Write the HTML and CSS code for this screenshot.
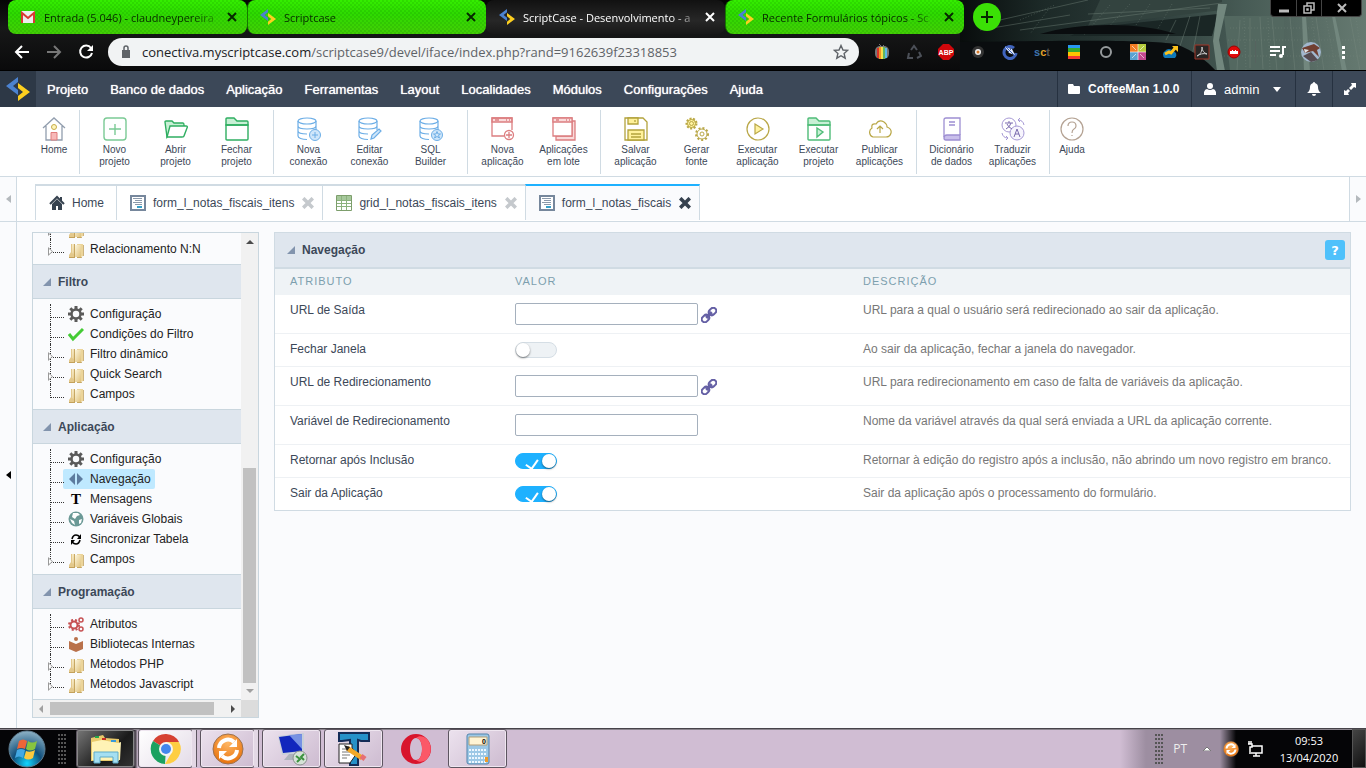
FILE: index.html
```html
<!DOCTYPE html>
<html lang="pt-BR">
<head>
    <meta charset="UTF-8">
    <meta name="viewport" content="width=device-width, initial-scale=1.0">
    <title>ScriptCase - Desenvolvimento</title>
    <link rel="stylesheet" href="styles.css">
</head>
<body>
    <!-- Shared icons -->
    <svg class="sprite" width="0" height="0" aria-hidden="true">
        <defs>
            <linearGradient id="folder-fill" x1="0" y1="0" x2="1" y2="1">
                <stop offset="0" stop-color="#fdf6dc"/>
                <stop offset="1" stop-color="#dfc07a"/>
            </linearGradient>
            <radialGradient id="orange-ball" cx="0.5" cy="0.3" r="0.7">
                <stop offset="0" stop-color="#ffb765"/>
                <stop offset="1" stop-color="#e8720c"/>
            </radialGradient>
        </defs>
        <symbol id="sc-logo" viewBox="0 0 24 24">
            <path fill="#4b82d0" d="M12 0 0 9l12 9v-5L7 9l5-4z"/>
            <path fill="#fdcf1f" d="M12 6v5l5 4-5 4v5l12-9z"/>
        </symbol>
        <symbol id="close" viewBox="0 0 10 10">
            <path d="M1 1l8 8M9 1L1 9" stroke="currentColor" stroke-width="2" fill="none"/>
        </symbol>
        <symbol id="folder" viewBox="0 0 16 16">
            <path fill="url(#folder-fill)" d="M3 1h4v13H3z"/>
            <path fill="#e3c88b" d="M1 15v-3l2-3V1l1 0v9l3 2v3z"/>
            <path fill="#c3a15a" d="M1 14h6v1H1z"/>
            <path fill="url(#folder-fill)" d="M7 2h6v12H7z"/>
            <path fill="#ecd59a" d="M9 1h6v12l-2 1v1H9v-1h4V2H9z"/>
            <path d="M6.500 1v13M15.500 2v11M9 14.500h5" stroke="#b8944a" stroke-opacity="0.700" fill="none"/>
        </symbol>
        <symbol id="gear" viewBox="0 0 16 16">
            <circle cx="8" cy="8" r="4.500" fill="none" stroke="currentColor" stroke-width="2.500"/>
            <path d="M8 0v3M8 13v3M0 8h3M13 8h3M2.300 2.300l2.200 2.200M11.500 11.500l2.200 2.200M13.700 2.300l-2.200 2.200M4.500 11.500l-2.200 2.200" stroke="currentColor" stroke-width="3"/>
        </symbol>
        <symbol id="form-icon" viewBox="0 0 16 16">
            <path fill="#fff" stroke="#76879c" stroke-width="2" d="M1 1h14v14H1z"/>
            <path stroke="#8b99aa" d="M3 3.500h9M5 5.500h7M3 7.500h9M5 9.500h7" fill="none"/>
            <path stroke="#36a0c8" stroke-width="2" d="M7 12h5"/>
        </symbol>
        <symbol id="database" viewBox="0 0 24 24">
            <g fill="none" stroke="#6daee6" stroke-width="1.200">
                <ellipse cx="10" cy="4" rx="9" ry="3"/>
                <path d="M1 4v15c0 2 4 3.500 9 3.500M19 4v9M1 9c0 2 4 3 9 3s9-1 9-3M1 14c0 2 4 3 9 3"/>
            </g>
        </symbol>
        <symbol id="sync" viewBox="0 0 32 32">
            <circle cx="16" cy="16" r="15" fill="url(#orange-ball)" stroke="#9b7252" stroke-width="1"/>
            <path d="M7 15a9 9 0 0 1 15-6M25 17a9 9 0 0 1-15 6" fill="none" stroke="#fff" stroke-width="4"/>
            <path d="M25 6v8h-8zM7 26v-8h8z" fill="#fff"/>
        </symbol>
        <symbol id="link" viewBox="0 0 16 16">
            <g fill="none" stroke="#6560a5" stroke-width="2" transform="rotate(-45 8 8)">
                <rect x="-1" y="5" width="8" height="6" rx="3"/>
                <rect x="9" y="5" width="8" height="6" rx="3"/>
                <path d="M4 8h8" stroke-width="3"/>
            </g>
        </symbol>
        <symbol id="tri" viewBox="0 0 8 8">
            <path fill="#8294ad" d="M8 0v8H0z"/>
        </symbol>
    </svg>

    <!-- Browser -->
    <header class="browser">
        <svg class="theme" viewBox="0 0 406 71" aria-hidden="true">
            <defs>
                <linearGradient id="sky" x1="0" x2="1" y1="0" y2="0">
                    <stop offset="0" stop-color="#080c0c"/>
                    <stop offset="0.200" stop-color="#1c2927"/>
                    <stop offset="0.450" stop-color="#2c3b39"/>
                    <stop offset="0.700" stop-color="#475b55"/>
                    <stop offset="1" stop-color="#667a71"/>
                </linearGradient>
            </defs>
            <path fill="url(#sky)" d="M0 0h406v71H0z"/>
            <path fill="#33433f" d="M140 0h122v10L128 26z"/>
            <path fill="#1a2625" d="M128 28l130-14-6 22H110z"/>
            <path fill="#536860" d="M264 16h60v55h-54z"/>
            <path fill="#72877e" d="M258 4h9l-8 36 6 31h-8l-4-30zM342 16h4l4 55h-6zM372 16h3l12 55h-5z"/>
            <g stroke="#77897f" stroke-opacity="0.400" fill="none">
                <path d="M40 20l88-20M60 30 262 3M128 14l122-6M20 30l90-15M280 20l-3 50M290 18v50M300 17l3 52M312 17l5 54M330 17l5 54M356 17l8 54M390 17l10 54M230 16l-10 30M240 16l-8 40M216 20l-10 20"/>
                <path stroke-dasharray="1 2" d="M60 20l35-15M88 10 70 34M150 5l-26 30M170 4l-26 28M190 4l-16 24M212 4l-16 28M284 18l2 52M308 18l2 52M352 18l6 52M366 18l10 52M396 18l6 40M270 28h90M268 40h134M264 56h140"/>
            </g>
            <path fill="#0a0d0f" d="M80 34c40-12 100-12 136 0zM0 42c120-2 190-2 216 2 20 8 32 18 40 27H0z"/>
        </svg>
        <div class="tab-strip">
            <div class="browser-tab">
                <svg class="favicon" viewBox="0 0 16 16"><path fill="#eee" d="M1 2h14v12H1z"/><path d="M2 14V4l6 5 6-5v10" fill="none" stroke="#d93a32" stroke-width="2"/></svg>
                <span class="tab-title">Entrada (5.046) - claudneypereira</span>
                <button class="tab-close" aria-label="Fechar"><svg width="10" height="10"><use href="#close"/></svg></button>
            </div>
            <div class="browser-tab">
                <svg class="favicon"><use href="#sc-logo"/></svg>
                <span class="tab-title">Scriptcase</span>
                <button class="tab-close" aria-label="Fechar"><svg width="10" height="10"><use href="#close"/></svg></button>
            </div>
            <div class="browser-tab current">
                <svg class="favicon"><use href="#sc-logo"/></svg>
                <span class="tab-title">ScriptCase - Desenvolvimento - a</span>
                <button class="tab-close" aria-label="Fechar"><svg width="10" height="10"><use href="#close"/></svg></button>
            </div>
            <div class="browser-tab">
                <svg class="favicon"><use href="#sc-logo"/></svg>
                <span class="tab-title">Recente Formulários tópicos - Sc</span>
                <button class="tab-close" aria-label="Fechar"><svg width="10" height="10"><use href="#close"/></svg></button>
            </div>
            <button class="new-tab" aria-label="Nova guia"><svg width="12" height="12" viewBox="0 0 12 12"><path d="M6 0v12M0 6h12" stroke="#062a00" stroke-width="2"/></svg></button>
        </div>
        <div class="window-controls">
            <button aria-label="Minimizar"><svg width="12" height="12" viewBox="0 0 12 12"><path d="M1 9h10" stroke="#bbb" stroke-width="3"/></svg></button>
            <button aria-label="Restaurar"><svg width="12" height="12" viewBox="0 0 12 12"><path d="M4 4V1h7v7H8M1 4h7v7H1zM4 7h1v1H4z" fill="none" stroke="#bbb" stroke-width="1.500"/></svg></button>
            <button aria-label="Fechar"><svg width="10" height="10" viewBox="0 0 10 10"><path d="M1 1l8 8M9 1L1 9" stroke="#bbb" stroke-width="2"/></svg></button>
        </div>
        <div class="address-row">
            <button class="nav-btn" aria-label="Voltar"><svg width="16" height="16" viewBox="0 0 16 16"><path d="M15 8H2M8 2 2 8l6 6" fill="none" stroke="#fff" stroke-width="2"/></svg></button>
            <button class="nav-btn" aria-label="Avançar"><svg width="16" height="16" viewBox="0 0 16 16"><path d="M1 8h13M8 2l6 6-6 6" fill="none" stroke="#777" stroke-width="2"/></svg></button>
            <button class="nav-btn" aria-label="Recarregar"><svg width="16" height="16" viewBox="0 0 16 16"><path d="M13 4a6 6 0 1 0 1 5" fill="none" stroke="#fff" stroke-width="2"/><path fill="#fff" d="M15 1v6H9z"/></svg></button>
            <div class="url-bar">
                <svg width="10" height="14" viewBox="0 0 10 14"><path fill="#5f6368" d="M1 5h8v8H1z"/><path d="M3 6V3a2 2 0 0 1 4 0v3" fill="none" stroke="#5f6368" stroke-width="1.500"/></svg>
                <span class="url"><b>conectiva.myscriptcase.com</b>/scriptcase9/devel/iface/index.php?rand=9162639f23318853</span>
                <svg width="16" height="16" viewBox="0 0 16 16"><path d="M8 1.500l2 4.500 4.600.4-3.500 3.100 1.100 4.700L8 11.700l-4.200 2.500 1.100-4.700L1.400 6.400 6 6z" fill="none" stroke="#5f6368" stroke-width="1.400"/></svg>
            </div>
            <div class="extensions">
                <svg viewBox="0 0 16 16"><rect x="1" y="2" width="14" height="13" rx="5" fill="#777"/><path fill="#d8332a" d="M3 4h2v10H3z"/><path fill="#f29325" d="M5 3h2v12H5z"/><path fill="#f6e04a" d="M7 3h2v12H7z"/><path fill="#63b55f" d="M9 3h2v12H9z"/><path fill="#5ab9e8" d="M11 4h2v10h-2z"/><path d="M5 0l3 3 2-2" fill="none" stroke="#777"/></svg>
                <svg viewBox="0 0 16 16"><path d="M5 6l3-4 3 4M13 8l2 4-4 2M7 14H2l1-5" fill="none" stroke="#4c5058" stroke-width="2"/></svg>
                <svg viewBox="0 0 16 16"><path fill="#d1070b" d="M5 0h6l5 5v6l-5 5H5l-5-5V5z"/><text x="8" y="11" font-size="7" text-anchor="middle" class="svg-label light">ABP</text></svg>
                <svg viewBox="0 0 16 16"><circle cx="8" cy="8" r="6" fill="#333"/><circle cx="8" cy="8" r="3" fill="#eee"/><circle cx="8" cy="8" r="1.500" fill="#d67828"/></svg>
                <svg viewBox="0 0 16 16"><path d="M12 4a6 6 0 1 0 2 5" fill="none" stroke="#4064bd" stroke-width="3"/><path fill="#dfe7fb" d="M3 3l7 2 3 6-6-2z"/><path d="M3 2l10 10M6 8l4-4" stroke="#4064bd"/></svg>
                <svg viewBox="0 0 16 16"><text x="0" y="12" font-size="11" class="svg-label"><tspan fill="#3f74af">s</tspan><tspan fill="#e1a22a">c</tspan><tspan fill="#555">t</tspan></text></svg>
                <svg viewBox="0 0 16 16"><path fill="#2896f3" d="M2 1h12v4H2z"/><path fill="#37aa2e" d="M2 4h12v4H2z"/><path fill="#ffc400" d="M2 8h12v4H2z"/><path fill="#f33b32" d="M2 12h12v3H2z"/></svg>
                <svg viewBox="0 0 16 16"><circle cx="8" cy="8" r="5" fill="none" stroke="#969a9c" stroke-width="2"/></svg>
                <svg viewBox="0 0 16 16"><path fill="#f37d24" d="M0 0h8v8H0z"/><path fill="#b6cb3d" d="M8 0h8v8H8z"/><path fill="#5aa2d1" d="M0 8h8v8H0z"/><path fill="#c3498f" d="M8 8h8v8H8z"/><path d="M8 0v16M0 8h16M2 2l4 4M10 6l4-4M2 14l4-4M10 10l4 4" stroke="#fff" stroke-opacity="0.600"/></svg>
                <svg viewBox="0 0 16 16"><path fill="#0f79b9" d="M3 14a4 4 0 0 1 0-7 5 5 0 0 1 8 0 4 4 0 0 1 2 7z"/><path d="M3 10l4-2 2 1 5-6" fill="none" stroke="#fdc21b" stroke-width="3"/><path fill="#fdc21b" d="M10 2h6v6z"/></svg>
                <svg viewBox="0 0 16 16"><path fill="#292625" stroke="#a23426" d="M1 1h14v14H1z"/><path d="M3 12c4-2 5-5 5-9 0 4 2 6 5 7-4-1-7 0-10 2" fill="none" stroke="#ccc"/></svg>
                <svg viewBox="0 0 16 16"><circle cx="8" cy="8" r="6" fill="#e00909" stroke="#9f0000"/><path fill="#fff" d="M4 7h2V6h1v1h2V6h1v1h2v3H4z"/></svg>
            </div>
            <div class="browser-menu">
                <svg width="16" height="16" viewBox="0 0 16 16"><path d="M0 3h10M0 7h10M0 11h6M13 2v9M13 3h3" stroke="#fff" stroke-width="2"/><circle cx="11" cy="12" r="2" fill="#fff"/></svg>
                <svg width="22" height="22" viewBox="0 0 22 22"><circle cx="11" cy="11" r="10" fill="#a2b7ce"/><path fill="#713f31" d="M2 7l12-4 6 4-3 2 2 7-6-6-8 2z"/><path fill="#554b51" d="M3 15l8-4 7 8-7 2z"/><path fill="#e0e5ea" d="M4 8l5 1-4 3z"/></svg>
                <svg width="4" height="16" viewBox="0 0 4 16"><path fill="#fff" d="M0 2h3v3H0zM0 7h3v3H0zM0 12h3v3H0z"/></svg>
            </div>
        </div>
    </header>

    <!-- Main menu -->
    <nav class="menu-bar">
        <a class="brand" href="#" aria-label="Scriptcase"><svg width="24" height="24"><use href="#sc-logo"/></svg></a>
        <div class="menu-links">
            <a href="#">Projeto</a>
            <a href="#">Banco de dados</a>
            <a href="#">Aplicação</a>
            <a href="#">Ferramentas</a>
            <a href="#">Layout</a>
            <a href="#">Localidades</a>
            <a href="#">Módulos</a>
            <a href="#">Configurações</a>
            <a href="#">Ajuda</a>
        </div>
        <button class="menu-cell project"><svg width="12" height="10" viewBox="0 0 12 10"><path fill="#fff" d="M0 1q0-1 1-1h4l1 2h5q1 0 1 1v6q0 1-1 1H1q-1 0-1-1z"/></svg>CoffeeMan 1.0.0</button>
        <button class="menu-cell user"><svg width="12" height="12" viewBox="0 0 12 12"><circle cx="6" cy="3" r="3" fill="#fff"/><path fill="#fff" d="M0 12V9q1-3 3-3 3 2 6 0 2 0 3 3v3z"/></svg>admin<svg class="caret" width="8" height="5" viewBox="0 0 8 5"><path fill="#fff" d="M0 0h8L4 5z"/></svg></button>
        <button class="menu-cell bell" aria-label="Notificações"><svg width="14" height="14" viewBox="0 0 14 14"><path fill="#fff" d="M7 0q1 0 1 1 3 1 3 4 0 4 3 6H0q3-2 3-6 0-3 3-4 0-1 1-1zM5 12h4q0 2-2 2t-2-2z"/></svg></button>
        <button class="menu-cell expand" aria-label="Expandir"><svg width="14" height="14" viewBox="0 0 14 14"><path fill="#fff" d="M8 1h5v5l-2-1-3 3-2-2 3-3zM1 8v5h5l-1-2 2-2-2-2-2 2z"/></svg></button>
    </nav>

    <!-- Toolbar -->
    <div class="toolbar">
        <div class="tool-group first">
            <button class="tool"><svg viewBox="0 0 24 24" fill="none" stroke="#929eae"><path d="M1 11 12 1l11 10M4 9v14h16V9" stroke-width="1.300"/><circle cx="12" cy="10" r="2.500" fill="#fff6bb" stroke="#c7ac4b"/><path fill="#f7b8b8" stroke="#df7c7c" d="M9 15.500h6V23H9z"/></svg>Home</button>
        </div>
        <div class="tool-group">
            <button class="tool"><svg viewBox="0 0 24 24" fill="none" stroke="#7bca95" stroke-width="1.400"><rect x="1" y="1" width="22" height="22" rx="3"/><path d="M12 7v11M6 12h12"/></svg>Novo<br>projeto</button>
            <button class="tool"><svg viewBox="0 0 24 24" fill="none" stroke="#2fae61" stroke-width="1.400"><path fill="#c8f0d5" d="M3 20 1 5q0-1 1-1h6l2 2h9q1 0 1 2v2H8z"/><path fill="#fff" d="M6 9h16q2 0 1 2l-3 8q0 1-2 1H3z"/></svg>Abrir<br>projeto</button>
            <button class="tool"><svg viewBox="0 0 24 24" fill="none" stroke="#2fae61" stroke-width="1.400"><path fill="#c8f0d5" d="M1 8V2q0-1 1-1h7l3 3h10q1 0 1 1v3z"/><path d="M1 8h22v14q0 1-1 1H2q-1 0-1-1z"/></svg>Fechar<br>projeto</button>
        </div>
        <div class="tool-group">
            <button class="tool"><svg viewBox="0 0 24 24" fill="none" stroke="#6daee6"><use href="#database"/><circle cx="18" cy="18" r="5.500" fill="#cfe6fa"/><path d="M18 15v6M15 18h6"/></svg>Nova<br>conexão</button>
            <button class="tool"><svg viewBox="0 0 24 24" fill="none" stroke="#6daee6"><use href="#database"/><path fill="#cfe6fa" stroke-width="1.200" d="M13 22l1-4 7-6 2 2-7 7z"/></svg>Editar<br>conexão</button>
            <button class="tool"><svg viewBox="0 0 24 24" fill="none" stroke="#6daee6"><use href="#database"/><circle cx="18" cy="18" r="5.500" fill="#cfe6fa"/><path d="M18 14.500l1 2.500h2.500l-2 1.500 1 2.500-2.500-1.500-2.500 1.500 1-2.500-2-1.500H17z"/></svg>SQL<br>Builder</button>
        </div>
        <div class="tool-group">
            <button class="tool"><svg viewBox="0 0 24 24" fill="none" stroke="#dc7e80" stroke-width="1.300"><path fill="#f9dada" d="M1 1h20v4H1z"/><path d="M13 19H1V1h20v12M4 3h4M15 3h1M18 3h1"/><circle cx="18" cy="18" r="4.500"/><path d="M18 15v6M15 18h6"/></svg>Nova<br>aplicação</button>
            <button class="tool"><svg viewBox="0 0 24 24" fill="none" stroke="#dc7e80" stroke-width="1.300"><path fill="#f9dada" d="M4 19v4h19V4h-3v15z"/><path fill="#fff" d="M1 1h19v18H1z"/><path fill="#f9dada" d="M1 1h19v4H1zM4 3h3M14 3h1M17 3h1"/></svg>Aplicações<br>em lote</button>
        </div>
        <div class="tool-group">
            <button class="tool"><svg viewBox="0 0 24 24" fill="none" stroke="#b3a33c" stroke-width="1.300"><path d="M1 1h18l4 4v18H1z"/><path fill="#fff19a" d="M4 1h10v6H4zM4 13h16v10H4zM7 17h10M7 20h10M11 3v2"/></svg>Salvar<br>aplicação</button>
            <button class="tool"><svg viewBox="0 0 24 24" fill="none" stroke="#b9a747"><circle cx="6.500" cy="6.500" r="5" fill="#fff3a1" stroke-width="2" stroke-dasharray="2 1.500"/><circle cx="6.500" cy="6.500" r="4"/><circle cx="6.500" cy="6.500" r="2"/><circle cx="17" cy="17" r="6" stroke-width="2" stroke-dasharray="2 2"/><circle cx="17" cy="17" r="5"/><circle cx="17" cy="17" r="2"/></svg>Gerar<br>fonte</button>
            <button class="tool"><svg viewBox="0 0 24 24" fill="none" stroke="#b9a747" stroke-width="1.200"><circle cx="12" cy="12" r="11"/><path fill="#fff3a1" d="M9 7l8 5-8 5z"/></svg>Executar<br>aplicação</button>
            <button class="tool"><svg viewBox="0 0 24 24" fill="none" stroke="#4fbc78" stroke-width="1.400"><path fill="#c8f0d5" d="M1 8V2q0-1 1-1h7l3 3h10q1 0 1 1v3z"/><path d="M1 8h22v14q0 1-1 1H2q-1 0-1-1z"/><path fill="#c8f0d5" d="M10 11l6 4-6 5z"/></svg>Executar<br>projeto</button>
            <button class="tool"><svg viewBox="0 0 24 24" fill="none" stroke="#b9a747" stroke-width="1.200"><path d="M5 20a5 5 0 0 1-1-9q-1-5 4-4 3-5 8-2 3 2 3 5 5 2 4 6-1 4-5 4zM12 16V9M9 12l3-3 3 3"/></svg>Publicar<br>aplicações</button>
        </div>
        <div class="tool-group">
            <button class="tool"><svg viewBox="0 0 24 24" fill="none" stroke="#9d8ed2" stroke-width="1.300"><path d="M4 20V3q0-2 2-2h14v17M9 5h6M9 8h6"/><path fill="#c9bfeb" d="M4 21q0-3 3-3h13v5H6q-2 0-2-2z"/></svg>Dicionário<br>de dados</button>
            <button class="tool"><svg viewBox="0 0 24 24" fill="none" stroke="#a79ad5"><circle cx="8" cy="8" r="7"/><circle cx="16" cy="16" r="7" fill="#f7f5fd"/><path stroke="#7a6aae" d="M4 6h8M8 4v2M10 6q-1 4-5 6M6 7q1 3 5 5M13 20l3-8 3 8M14 17h4"/><path d="M17 3q5 0 6 5M19 1l-2 2 2 2M1 16q1 5 6 5M5 19l2 2-2 2"/></svg>Traduzir<br>aplicações</button>
        </div>
        <div class="tool-group last">
            <button class="tool"><svg viewBox="0 0 24 24" fill="none" stroke="#b4a293" stroke-width="1.200"><circle cx="12" cy="12" r="11"/><path d="M8 9q0-4 4-4t4 4q0 2-2 3-2 1-2 4M12 18v1"/></svg>Ajuda</button>
        </div>
    </div>

    <!-- Open applications -->
    <div class="app-tabs">
        <button class="scroll-tab left" aria-label="Anterior"><svg width="5" height="8" viewBox="0 0 5 8"><path fill="#b4b9bd" d="M5 0v8L0 4z"/></svg></button>
        <div class="tabs">
            <a class="app-tab" href="#"><svg width="16" height="16" viewBox="0 0 16 16"><path fill="#36424f" d="M3 9l5-5 5 5v6H9v-4H7v4H3zM11 2h2v4h-2z"/><path d="M1 9l7-7 7 7" fill="none" stroke="#36424f" stroke-width="2"/></svg>Home</a>
            <a class="app-tab" href="#"><svg width="16" height="16"><use href="#form-icon"/></svg>form_l_notas_fiscais_itens<svg class="x" viewBox="0 0 10 10"><path d="M1 1l8 8M9 1L1 9" stroke="currentColor" stroke-width="3"/></svg></a>
            <a class="app-tab" href="#"><svg width="16" height="16" viewBox="0 0 16 16"><path fill="#fff" stroke="#7d9e6c" d="M.5.5h15v15H.5z"/><path fill="#a6c89b" d="M1 1h14v4H1z"/><path d="M1 5.500h14M1 8.500h14M1 11.500h14M5.500 1v14M10.500 1v14" stroke="#8cb27e"/></svg>grid_l_notas_fiscais_itens<svg class="x" viewBox="0 0 10 10"><path d="M1 1l8 8M9 1L1 9" stroke="currentColor" stroke-width="3"/></svg></a>
            <a class="app-tab active" href="#"><svg width="16" height="16"><use href="#form-icon"/></svg>form_l_notas_fiscais<svg class="x" viewBox="0 0 10 10"><path d="M1 1l8 8M9 1L1 9" stroke="currentColor" stroke-width="3"/></svg></a>
        </div>
        <button class="scroll-tab right" aria-label="Próxima"><svg width="5" height="8" viewBox="0 0 5 8"><path fill="#b4b9bd" d="M0 0v8l5-4z"/></svg></button>
    </div>

    <main class="workspace">
        <button class="collapse" aria-label="Recolher"><svg width="5" height="8" viewBox="0 0 5 8"><path d="M5 0v8L0 4z"/></svg></button>

        <aside class="sidebar">
            <div class="tree">
                <ul class="tree-list">
                    <li class="node branch"><a href="#" aria-label="Pasta"><svg><use href="#folder"/></svg></a></li>
                    <li class="node branch"><a href="#"><svg><use href="#folder"/></svg>Relacionamento N:N</a></li>
                </ul>
                <h2 class="tree-head"><svg width="8" height="8"><use href="#tri"/></svg>Filtro</h2>
                <ul class="tree-list">
                    <li class="node"><a href="#"><svg class="gear"><use href="#gear"/></svg>Configuração</a></li>
                    <li class="node"><a href="#"><svg viewBox="0 0 16 16"><path d="M1 8l4 5L15 3" fill="none" stroke="#44cb35" stroke-width="3"/></svg>Condições do Filtro</a></li>
                    <li class="node branch"><a href="#"><svg><use href="#folder"/></svg>Filtro dinâmico</a></li>
                    <li class="node branch"><a href="#"><svg><use href="#folder"/></svg>Quick Search</a></li>
                    <li class="node"><a href="#"><svg class="low"><use href="#folder"/></svg>Campos</a></li>
                </ul>
                <h2 class="tree-head"><svg width="8" height="8"><use href="#tri"/></svg>Aplicação</h2>
                <ul class="tree-list">
                    <li class="node"><a href="#"><svg class="gear"><use href="#gear"/></svg>Configuração</a></li>
                    <li class="node"><a class="selected" href="#"><svg viewBox="0 0 16 16"><path fill="#5d7c9f" d="M7 2v12L1 8zM9 2v12l6-6z"/></svg>Navegação</a></li>
                    <li class="node"><a href="#"><svg viewBox="0 0 16 16"><text x="8" y="13" font-size="15" text-anchor="middle" class="serif-t">T</text></svg>Mensagens</a></li>
                    <li class="node"><a href="#"><svg viewBox="0 0 16 16"><circle cx="8" cy="8" r="7.500" fill="#6b9996"/><path fill="#fff" d="M5 2l5 0 2 2-3 1-2 3-3-2zM2 8l4 2 1 4-3-2zM11 9l3-1-1 4-2 1z"/></svg>Variáveis Globais</a></li>
                    <li class="node"><a href="#"><svg viewBox="0 0 16 16"><path d="M4 8q1-4 4-4 2 0 4 2M12 9q-1 4-4 4-2 0-4-2" fill="none" stroke="#000" stroke-width="1.600"/><path d="M13 3v5H9zM3 14V9h4z"/></svg>Sincronizar Tabela</a></li>
                    <li class="node branch"><a href="#"><svg><use href="#folder"/></svg>Campos</a></li>
                </ul>
                <h2 class="tree-head"><svg width="8" height="8"><use href="#tri"/></svg>Programação</h2>
                <ul class="tree-list">
                    <li class="node"><a href="#"><svg viewBox="0 0 16 16" fill="none" stroke="#c65153"><circle cx="6" cy="9" r="3.500" stroke-width="2"/><circle cx="6" cy="9" r="5" stroke-width="2" stroke-dasharray="2 2"/><circle cx="13" cy="4" r="2" stroke-width="1.500"/><circle cx="13" cy="13" r="2" stroke-width="1.500"/></svg>Atributos</a></li>
                    <li class="node"><a href="#"><svg viewBox="0 0 16 16"><circle cx="8" cy="3" r="2" fill="#b9714b"/><path fill="#b9714b" d="M1 5l7 3 7-3v8l-7 3-7-3z"/></svg>Bibliotecas Internas</a></li>
                    <li class="node branch"><a href="#"><svg><use href="#folder"/></svg>Métodos PHP</a></li>
                    <li class="node branch"><a href="#"><svg><use href="#folder"/></svg>Métodos Javascript</a></li>
                </ul>
            </div>
            <div class="vscroll">
                <svg width="8" height="4" viewBox="0 0 8 4"><path fill="#4b4b4b" d="M0 4l4-4 4 4z"/></svg>
                <span class="thumb"></span>
                <svg width="8" height="4" viewBox="0 0 8 4"><path fill="#a0a0a0" d="M0 0l4 4 4-4z"/></svg>
            </div>
            <div class="hscroll">
                <svg width="4" height="8" viewBox="0 0 4 8"><path fill="#a0a0a0" d="M4 0v8L0 4z"/></svg>
                <span class="thumb"></span>
                <svg width="4" height="8" viewBox="0 0 4 8"><path fill="#4b4b4b" d="M0 0v8l4-4z"/></svg>
            </div>
            <div class="corner"></div>
        </aside>

        <section class="panel">
            <div class="panel-head">
                <svg width="8" height="8"><use href="#tri"/></svg>
                <h2>Navegação</h2>
                <button class="help" aria-label="Ajuda">?</button>
            </div>
            <table class="attributes">
                <thead>
                    <tr><th class="attr">Atributo</th><th class="value">Valor</th><th>Descrição</th></tr>
                </thead>
                <tbody>
                    <tr>
                        <td><label for="exit-url">URL de Saída</label></td>
                        <td><div class="field"><input type="text" id="exit-url"><a href="#" aria-label="Link"><svg width="16" height="16"><use href="#link"/></svg></a></div></td>
                        <td>URL para a qual o usuário será redirecionado ao sair da aplicação.</td>
                    </tr>
                    <tr>
                        <td><label for="close-window">Fechar Janela</label></td>
                        <td><input type="checkbox" class="switch" id="close-window"></td>
                        <td>Ao sair da aplicação, fechar a janela do navegador.</td>
                    </tr>
                    <tr>
                        <td><label for="redirect-url">URL de Redirecionamento</label></td>
                        <td><div class="field"><input type="text" id="redirect-url"><a href="#" aria-label="Link"><svg width="16" height="16"><use href="#link"/></svg></a></div></td>
                        <td>URL para redirecionamento em caso de falta de variáveis da aplicação.</td>
                    </tr>
                    <tr>
                        <td><label for="redirect-var">Variável de Redirecionamento</label></td>
                        <td><div class="field"><input type="text" id="redirect-var"></div></td>
                        <td>Nome da variável através da qual será enviada a URL da aplicação corrente.</td>
                    </tr>
                    <tr>
                        <td><label for="return-insert">Retornar após Inclusão</label></td>
                        <td><input type="checkbox" class="switch" id="return-insert" checked></td>
                        <td>Retornar à edição do registro após a inclusão, não abrindo um novo registro em branco.</td>
                    </tr>
                    <tr>
                        <td><label for="exit-app">Sair da Aplicação</label></td>
                        <td><input type="checkbox" class="switch" id="exit-app" checked></td>
                        <td>Sair da aplicação após o processamento do formulário.</td>
                    </tr>
                </tbody>
            </table>
        </section>
    </main>

    <!-- Windows taskbar -->
    <footer class="taskbar">
        <button class="start" aria-label="Iniciar">
            <svg width="38" height="38" viewBox="0 0 38 38">
                <defs><radialGradient id="orb" cx="0.500" cy="0.900" r="0.900"><stop offset="0" stop-color="#12d6ff"/><stop offset="0.450" stop-color="#11507c"/><stop offset="1" stop-color="#8fb3c6"/></radialGradient></defs>
                <circle cx="19" cy="19" r="18" fill="url(#orb)" stroke="#5f7d90"/>
                <path fill="#ed6538" d="M11 11q4-3 8 0l-2 8q-4-2-8 0z"/><path fill="#87c43f" d="M20 11q4 3 9 0l-2 8q-5 3-9 0z"/><path fill="#43a9e4" d="M9 20q4-2 8 0l-2 8q-4-3-8 0z"/><path fill="#fcc93d" d="M18 21q4 2 9-1l-2 8q-5 3-9 0z"/>
            </svg>
        </button>
        <span class="grip"></span>
        <div class="tasks">
            <button class="task dark" aria-label="Explorador"><svg width="34" height="32" viewBox="0 0 34 32"><path fill="#e9ca6b" d="M2 5l12-3 2 3 14 1v22H2z"/><path fill="#fff3b6" d="M3 9l10-2 16 3 3-1-1 18H3z"/><path fill="#25a94d" d="M6 3h4v2H6z"/><path fill="#c72e24" d="M13 5h4v2h-4z"/><path fill="#399ada" d="M22 7h5v2h-5z"/><path fill="#a5dff2" stroke="#5eabc9" d="M5 30V19h24v11h-5v-6H11v6z"/></svg></button>
            <button class="task light stacked" aria-label="Chrome"><svg width="32" height="32" viewBox="0 0 32 32"><path fill="#d64132" d="M16 16 3 8a15 15 0 0 1 26 1H16z"/><path fill="#1ba160" d="M16 16l-1 15A15 15 0 0 1 3 8z"/><path fill="#fece43" d="M16 9h13a15 15 0 0 1-14 22l7-12z"/><circle cx="16" cy="16" r="7" fill="#f4f4f4"/><circle cx="16" cy="16" r="5" fill="#4387ee"/></svg></button>
            <button class="task stacked" aria-label="Sincronizar"><svg width="32" height="32"><use href="#sync"/></svg></button>
            <button class="task" aria-label="Área remota"><svg width="32" height="34" viewBox="0 0 32 34"><path fill="#c8cfd8" d="M2 4l26-3v20L6 23z"/><path fill="#1227bd" d="M3 5l23-3v17L7 21z"/><path fill="#7791e3" d="M13 3l13-1v15z"/><path fill="#aeb3bc" d="M13 22h6l2 6H8z"/><circle cx="24" cy="26" r="7" fill="#d6e2d7" stroke="#8d9190"/><path d="M20 24l4 3-3 3M28 22l-3 3 3 3" fill="none" stroke="#3b923d" stroke-width="2"/></svg></button>
            <button class="task" aria-label="Editor"><svg width="34" height="34" viewBox="0 0 34 34"><path fill="#2691c8" stroke="#142c57" stroke-width="2" d="M2 1h30v8h-8l-3-1v25h-8V8l-8 1H2z"/><path fill="#fff" stroke="#222" d="M2 12h13v4l5 5-7 10H2z"/><path d="M5 17h7M5 20h9M5 23h8M5 26h5" stroke="#777"/><path d="M10 16l15 10" stroke="#f3a929" stroke-width="5"/><path fill="#222" d="M7 13l6 2-3 4z"/><path d="M24 24l4 3" stroke="#e76f73" stroke-width="5"/></svg></button>
            <button class="task plain" aria-label="Opera"><svg width="32" height="32" viewBox="0 0 32 32"><path fill="#d8142c" fill-rule="evenodd" d="M16 1a15 15 0 0 0 0 30 15 15 0 0 0 0-30zM16 5c4 0 6 5 6 11s-2 11-6 11-6-5-6-11 2-11 6-11z"/><path fill="#fb5868" d="M16 5c3-3 8-2 11 1 5 6 5 14 0 20-3 3-8 4-11 1 4 0 6-5 6-11S20 5 16 5z"/></svg></button>
            <button class="task" aria-label="Calculadora"><svg width="24" height="32" viewBox="0 0 24 32"><rect x="1" y="1" width="22" height="30" rx="2" fill="#9cc8e6" stroke="#5284ac"/><path fill="#fff4d4" stroke="#b29d76" d="M3 4h18v8H3z"/><text x="18" y="11" font-size="7" text-anchor="middle" class="svg-label">0</text><path d="M3 17h18M3 21h18M3 25h18M3 29h18" stroke="#edf7ff" stroke-width="2" stroke-dasharray="2 1"/><path fill="#f09a29" d="M19 24h3v5h-3z"/></svg></button>
        </div>
        <div class="tray">
            <span class="grip"></span>
            <span class="lang">PT</span>
            <svg width="8" height="5" viewBox="0 0 8 5"><path fill="#fff" stroke="#777" d="M0 5l4-4 4 4z"/></svg>
            <svg width="16" height="16"><use href="#sync"/></svg>
            <svg width="16" height="16" viewBox="0 0 16 16"><path fill="none" stroke="#fff" stroke-width="1.500" d="M5 5h10v7H4M9 12v3M6 15h7M1 3h4v3H3v7M2 0v3M4 0v3"/></svg>
            <time class="clock">09:53<br>13/04/2020</time>
            <button class="show-desktop" aria-label="Mostrar área de trabalho"></button>
        </div>
    </footer>
</body>
</html>
```
FILE: styles.css
```css
* {
    margin: 0;
    padding: 0;
    box-sizing: border-box;
}

body {
    display: flex;
    flex-direction: column;
    min-height: 100vh;
    font-family: "Liberation Sans", Arial, sans-serif;
    font-size: 12px;
    color: #3c4858;
    background: #fafbfd;
}

button {
    border: none;
    background: none;
    font: inherit;
    color: inherit;
    cursor: pointer;
}

a {
    color: inherit;
    text-decoration: none;
}

svg {
    display: block;
    flex: none;
}

.sprite {
    position: absolute;
}

.svg-label {
    font-family: "Liberation Sans", Arial, sans-serif;
    font-weight: bold;
}

.svg-label.light {
    fill: #fff;
}

/* Browser */
.browser {
    position: relative;
    height: 71px;
    background: linear-gradient(#050505, #171818 40%, #0a0a0b);
    border-bottom: 1px solid #000;
    font-family: "Open Sans", "Noto Sans", sans-serif;
    overflow: hidden;
}

.theme {
    position: absolute;
    top: 0;
    right: 0;
    width: 406px;
    height: 71px;
}

.tab-strip {
    position: relative;
    display: flex;
    height: 34px;
    padding-left: 8px;
}

.browser-tab {
    display: flex;
    align-items: center;
    gap: 8px;
    width: 239px;
    height: 34px;
    padding: 0 10px 0 12px;
    border-radius: 8px;
    background: repeating-conic-gradient(rgba(0, 90, 0, 0.12) 0 25%, transparent 0 50%) 0 0 / 4px 4px, linear-gradient(#35ef00, #2edb00 40%, #43cf05);
    color: #062a00;
    font-size: 11px;
}

.browser-tab + .browser-tab {
    border-left: 1px solid #157800;
}

.browser-tab.current {
    background: linear-gradient(#111, #272727 60%, #181818);
    border-left-color: transparent;
    color: #fff;
}

.favicon {
    width: 16px;
    height: 16px;
}

.tab-title {
    flex: 1;
    white-space: nowrap;
    -webkit-mask-image: linear-gradient(90deg, #000 85%, rgba(0, 0, 0, 0.2));
    mask-image: linear-gradient(90deg, #000 85%, rgba(0, 0, 0, 0.2));
}

.tab-close {
    width: 10px;
    height: 10px;
}

.new-tab {
    display: flex;
    align-items: center;
    justify-content: center;
    width: 28px;
    height: 28px;
    margin: 3px 0 0 9px;
    border-radius: 50%;
    background: #3be006;
}

.window-controls {
    position: absolute;
    top: 0;
    right: 4px;
    display: flex;
    width: 92px;
    height: 17px;
    border: 1px solid #444;
    border-top: none;
    border-radius: 0 0 4px 4px;
    background: #000;
}

.window-controls button {
    display: flex;
    width: 25px;
    align-items: center;
    justify-content: center;
}

.window-controls button + button {
    border-left: 1px solid #444;
}

.window-controls button:last-child {
    flex: 1;
}

.address-row {
    position: relative;
    display: flex;
    align-items: center;
    height: 36px;
    padding-left: 6px;
}

.nav-btn {
    display: flex;
    justify-content: center;
    width: 32px;
}

.url-bar {
    display: flex;
    flex: 1;
    align-items: center;
    height: 28px;
    margin: 0 7px 0 6px;
    padding: 0 10px 0 13px;
    border-radius: 14px;
    background: #f1f3f4;
    color: #5f6368;
}

.url {
    flex: 1;
    margin-left: 11px;
    font-size: 13px;
    white-space: nowrap;
    overflow: hidden;
}

.url b {
    color: #202124;
    font-weight: normal;
}

.extensions {
    display: flex;
}

.extensions svg {
    width: 16px;
    height: 16px;
    margin: 0 8px;
}

.browser-menu {
    display: flex;
    align-items: center;
    gap: 14px;
    margin-left: 5px;
    padding: 0 20px 0 14px;
    border-left: 1px solid #56635f;
}

.browser-menu svg:nth-child(2) {
    margin-right: 6px;
}

/* Main menu */
.menu-bar {
    display: flex;
    height: 36px;
    background: #3c4858;
    color: #fff;
    font-size: 13px;
}

.brand {
    display: flex;
    align-items: center;
    justify-content: center;
    width: 36px;
    background: #2d3846;
}

.menu-links {
    display: flex;
    flex: 1;
    align-items: center;
    gap: 22px;
    padding-left: 11px;
    text-shadow: 0 0 1px #fff;
}

.menu-cell {
    display: flex;
    align-items: center;
    gap: 8px;
    padding: 0 12px;
    border-left: 1px solid #263140;
    white-space: nowrap;
}

.menu-cell.project {
    width: 134px;
    padding: 0 10px;
    font-size: 12px;
    font-weight: bold;
}

.menu-cell.user {
    width: 104px;
}

.menu-cell .caret {
    margin-left: 6px;
}

.menu-cell.bell {
    width: 37px;
    padding: 0 11px;
}

.menu-cell.expand {
    width: 34px;
    padding: 0 10px;
}

/* Toolbar */
.toolbar {
    display: flex;
    height: 70px;
    padding: 3px 0 2px 29px;
    border-bottom: 1px solid #d0dbe3;
    background: #fff;
}

.tool-group {
    display: flex;
    align-items: flex-start;
    padding: 0 6px 0 4px;
    border-right: 1px solid #d0dbe3;
}

.tool-group.first {
    padding: 0;
}

.tool-group.last {
    border: none;
}

.tool {
    width: 61px;
    padding-top: 7px;
    font-size: 10px;
    line-height: 12px;
    text-align: center;
}

.tool svg {
    width: 24px;
    height: 24px;
    margin: 0 auto 3px;
}

.tool-group.first .tool {
    width: 50px;
}

.tool-group.last .tool {
    width: 36px;
}

/* Open applications */
.app-tabs {
    display: flex;
    height: 45px;
    border-bottom: 1px solid #d0dbe3;
    background: #fff;
}

.scroll-tab {
    display: flex;
    align-items: center;
    justify-content: center;
    width: 17px;
    background: #fafbfd;
}

.scroll-tab.left {
    border-right: 1px solid #d0dbe3;
}

.scroll-tab.right {
    border-left: 1px solid #d0dbe3;
}

.tabs {
    display: flex;
    flex: 1;
    align-items: flex-start;
    padding: 7px 0 0 18px;
}

.app-tab {
    display: flex;
    align-items: center;
    gap: 7px;
    height: 36px;
    padding: 0 8px 0 13px;
    border-top: 2px solid #d0dbe3;
    border-left: 1px solid #d0dbe3;
}

.app-tab:first-child {
    padding-right: 12px;
}

.app-tab.active {
    border-top-color: #1eb1ff;
    border-right: 1px solid #d0dbe3;
    background: #fafbfd;
}

.app-tab .x {
    width: 12px;
    height: 12px;
    margin-left: 1px;
    color: #c5c9cd;
}

.app-tab.active .x {
    color: #36424f;
}

/* Workspace */
.workspace {
    display: flex;
    flex: 1;
    padding-right: 15px;
}

.collapse {
    display: flex;
    align-items: center;
    justify-content: center;
    width: 17px;
    border-right: 1px solid #d0dbe3;
}

/* Sidebar tree */
.sidebar {
    display: grid;
    grid-template-columns: 1fr 17px;
    grid-template-rows: 1fr 17px;
    width: 227px;
    margin: 10px 15px;
    border: 1px solid #c9d6de;
}

.tree {
    display: flex;
    flex-direction: column;
    justify-content: flex-end;
    height: 467px;
    overflow: hidden;
    border-bottom: 1px solid #c9d6de;
}

.tree-head {
    display: flex;
    flex: none;
    align-items: center;
    gap: 7px;
    height: 35px;
    padding-left: 10px;
    border-top: 1px solid #c9d6de;
    border-bottom: 1px solid #c9d6de;
    background: #dfe6ee;
    font-size: 12px;
}

.tree-list {
    flex: none;
    padding: 5px 0 5px 17px;
    list-style: none;
    color: #222;
}

.node {
    position: relative;
    display: flex;
    height: 20px;
    padding-left: 13px;
}

.node::before {
    content: "";
    position: absolute;
    top: 0;
    left: 0;
    width: 13px;
    height: 13px;
    border-left: 1px dotted #333;
    border-bottom: 1px dotted #333;
}

/* rest of the vertical line down to the next node */
.node:not(:last-child)::after {
    content: "";
    position: absolute;
    top: 13px;
    left: 0;
    height: 7px;
    border-left: 1px dotted #333;
}

/* hollow arrow of a closed folder */
.branch a::before,
.branch a::after {
    content: "";
    position: absolute;
    z-index: 1;
    top: 8px;
    left: -2px;
    width: 5px;
    height: 9px;
    background: #999;
    clip-path: polygon(0 0, 100% 50%, 0 100%);
}

.branch a::after {
    top: 10px;
    left: -1px;
    width: 3px;
    height: 5px;
    background: #fff;
}

.node a {
    display: flex;
    align-items: center;
    gap: 6px;
    padding: 0 4px 0 5px;
    border-radius: 2px;
}

.node a.selected {
    background: #bfe9ff;
}

.node svg {
    width: 16px;
    height: 16px;
}

.node.branch svg,
.node svg.low {
    margin-top: 4px;
}

.node .gear {
    color: #5a5a5a;
}

.serif-t {
    font-family: "Liberation Serif", "Times New Roman", serif;
    font-weight: bold;
}

.vscroll,
.hscroll {
    display: flex;
    align-items: center;
    justify-content: space-between;
    background: #f1f1f1;
}

.vscroll {
    flex-direction: column;
    padding: 7px 0;
}

.vscroll .thumb {
    width: 13px;
    height: 215px;
    margin: auto 0 6px;
    background: #c1c1c1;
}

.hscroll {
    padding: 0 6px;
}

.hscroll .thumb {
    width: 164px;
    height: 13px;
    margin: 0 auto 0 7px;
    background: #c1c1c1;
}

.corner {
    background: #dcdcdc;
}

/* Attributes panel */
.panel {
    flex: 1;
    align-self: flex-start;
    margin-top: 10px;
    border: 1px solid #d0dbe3;
    background: #fff;
}

.panel-head {
    display: flex;
    align-items: center;
    gap: 7px;
    height: 36px;
    padding: 0 5px 0 12px;
    border-bottom: 2px solid #d0dbe3;
    background: #dfe6ee;
}

.panel-head h2 {
    flex: 1;
    font-size: 12px;
}

.help {
    width: 20px;
    height: 20px;
    border-radius: 3px;
    background: #4fc1fb;
    color: #fff;
    font-family: "DejaVu Sans", sans-serif;
    font-size: 13px;
    font-weight: bold;
}

.attributes {
    width: 100%;
    table-layout: fixed;
    border-collapse: collapse;
    line-height: 14px;
}

.attributes th {
    height: 26px;
    padding: 0 15px 2px;
    background: #eff3f6;
    color: #7d9fae;
    font-size: 11px;
    font-weight: normal;
    letter-spacing: 1px;
    text-align: left;
    text-transform: uppercase;
}

.attributes .attr {
    width: 225px;
}

.attributes .value {
    width: 348px;
}

.attributes td {
    padding: 8px 15px;
    border-bottom: 1px solid #eef1f4;
    vertical-align: top;
}

.attributes tr:last-child td {
    border-bottom: none;
}

.attributes td:last-child {
    color: #777;
}

.field {
    display: flex;
    align-items: center;
    gap: 3px;
    height: 22px;
}

.field a {
    padding-top: 2px;
}

.field input {
    width: 183px;
    height: 22px;
    padding: 0 6px;
    border: 1px solid #a5b0bd;
    border-radius: 2px;
    background: #fff;
}

.switch {
    appearance: none;
    display: block;
    position: relative;
    width: 42px;
    height: 16px;
    border: 1px solid #d5dee5;
    border-radius: 8px;
    background: #eef2f5;
}

.switch::after {
    content: "";
    position: absolute;
    top: 0;
    left: 0;
    width: 14px;
    height: 14px;
    border-radius: 50%;
    background: #fff;
    box-shadow: 0 1px 2px rgba(0, 0, 0, 0.5);
}

.switch:checked {
    border-color: #1eb1ff;
    background: #1eb1ff;
}

.switch:checked::after {
    left: 26px;
}

.switch:checked::before {
    content: "";
    position: absolute;
    top: 3px;
    left: 12px;
    width: 6px;
    height: 10px;
    border: solid #fff;
    border-width: 0 2px 2px 0;
    transform: rotate(35deg);
}

/* Windows taskbar */
.taskbar {
    display: flex;
    height: 40px;
    border-top: 1px solid #46434a;
    background: linear-gradient(90deg, #050507 134px, #d0bdd3 138px, #d0bdd3 calc(100% - 246px), #9d8ea1 calc(100% - 220px), #9d8ea1 calc(100% - 146px), #050507 calc(100% - 130px));
    box-shadow: inset 0 1px #8a848d;
}

.start {
    width: 54px;
    padding-left: 8px;
}

.grip {
    width: 9px;
    height: 30px;
    margin: 5px 13px 0 4px;
    background: radial-gradient(circle at 1px 1px, #555 1px, transparent 1px) 0 0 / 3px 4px;
}

.tasks {
    display: flex;
    gap: 3px;
    flex: 1;
    margin-left: -4px;
}

.task {
    position: relative;
    display: flex;
    align-items: center;
    justify-content: center;
    width: 59px;
    height: 39px;
    border: 1px solid #5d5560;
    border-radius: 3px;
    background: linear-gradient(135deg, #ece2ee, #cdbbd0);
    box-shadow: inset 0 0 0 1px #efe6f0;
}

.task.dark {
    background: linear-gradient(135deg, #777, #1a1a1a 60%, #333);
    box-shadow: inset 0 0 0 1px #888;
}

.task.light {
    background: linear-gradient(135deg, #fff, #e4dce8);
}

.task.stacked {
    width: 55px;
    margin-right: 4px;
}

.task.stacked::after {
    content: "";
    position: absolute;
    top: 0;
    right: -5px;
    width: 4px;
    height: 37px;
    border-right: 1px solid #5d5560;
    background: #e3d8e5;
}

.task.plain {
    border-color: transparent;
    background: none;
    box-shadow: none;
}

.tray {
    display: flex;
    align-items: center;
    color: #fff;
    font-family: "Open Sans", "Noto Sans", sans-serif;
}

.tray .grip {
    margin: 0 9px 0 0;
}

.lang {
    margin-right: 16px;
    color: #eee;
}

.tray svg + svg {
    margin-left: 12px;
}

.tray svg:nth-of-type(3) {
    margin-left: 8px;
}

.clock {
    width: 86px;
    margin-left: 3px;
    font-size: 11px;
    line-height: 17px;
    text-align: center;
}

.show-desktop {
    width: 14px;
    height: 39px;
    border: 1px solid #555;
    background: linear-gradient(135deg, #444, #111);
}
```
